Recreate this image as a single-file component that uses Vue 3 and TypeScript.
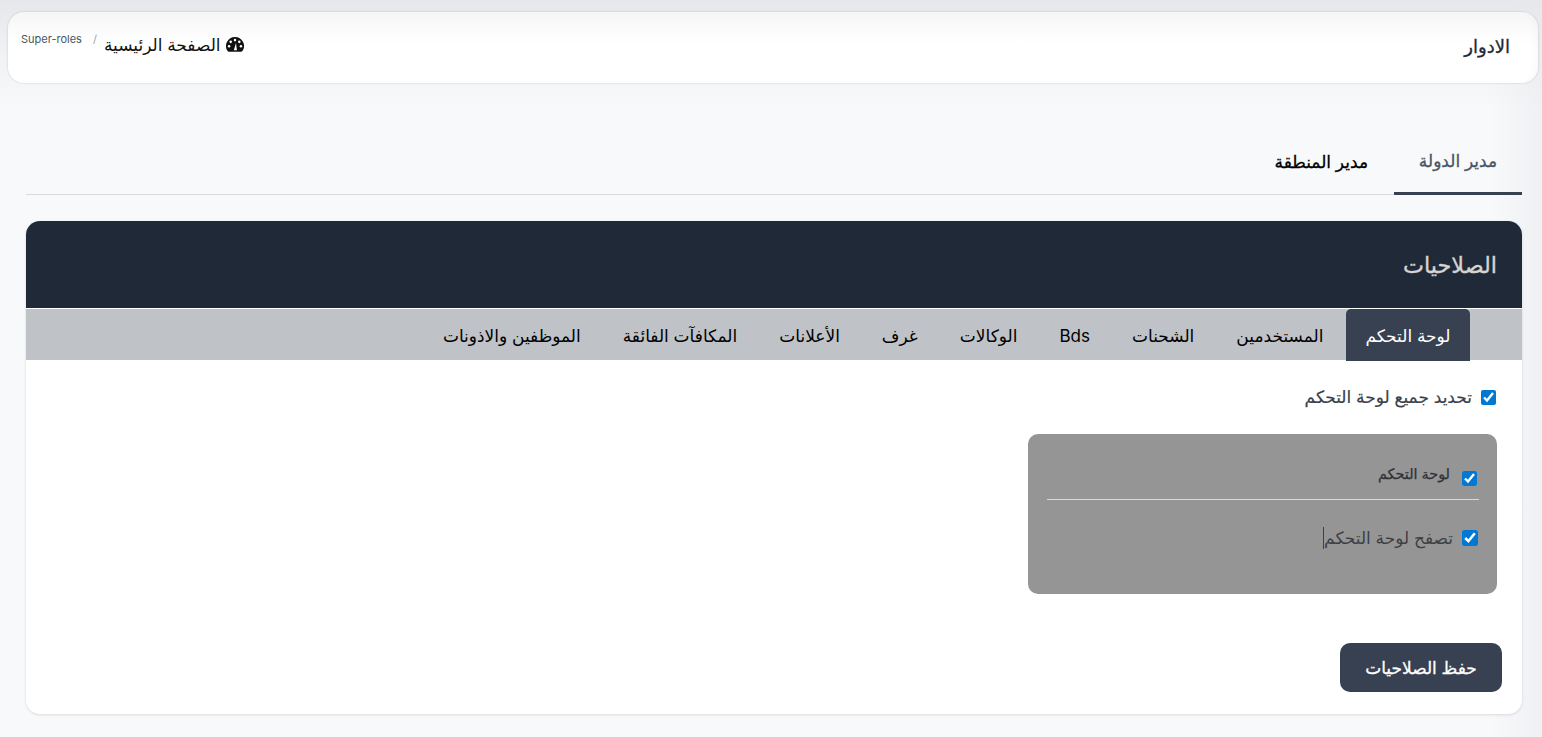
<script setup lang="ts">
const subTabs: string[] = ['لوحة التحكم', 'المستخدمين', 'الشحنات', 'Bds', 'الوكالات', 'غرف', 'الأعلانات', 'المكافآت الفائقة', 'الموظفين والاذونات']
</script>

<template>
  <div class="page" dir="rtl">
    <header class="topbar">
      <h1 class="page-title">الادوار</h1>
      <nav class="crumbs">
        <span class="crumb-home">
          <svg class="gauge" viewBox="0.8 1.8 18.4 15.4" aria-hidden="true">
            <path d="M10 1.8a9.2 9.2 0 0 0-7.6 14.4c.3.5.8.8 1.4.8h12.4c.6 0 1.1-.3 1.4-.8A9.2 9.2 0 0 0 10 1.8Z" />
            <circle cx="10" cy="5" r="1.3" fill="#fff" />
            <circle cx="5.6" cy="6.8" r="1.3" fill="#fff" />
            <circle cx="14.4" cy="6.8" r="1.3" fill="#fff" />
            <circle cx="3.9" cy="11.2" r="1.3" fill="#fff" />
            <circle cx="16.1" cy="11.2" r="1.3" fill="#fff" />
            <path d="M8.8 15.5 11 8l1 7.5Z" fill="#fff" />
          </svg>
          الصفحة الرئيسية
        </span>
        <span class="sep">/</span>
        <span class="crumb-sub" dir="ltr">Super-roles</span>
      </nav>
    </header>

    <div class="role-tabs">
      <button class="role-tab active">مدير الدولة</button>
      <button class="role-tab">مدير المنطقة</button>
    </div>

    <section class="card">
      <div class="card-head">
        <h2>الصلاحيات</h2>
      </div>
      <div class="sub-tabs">
        <button v-for="(t, i) in subTabs" :key="t" class="sub-tab" :class="{ on: i === 0 }">{{ t }}</button>
      </div>
      <div class="card-body">
        <label class="all-row">
          <input type="checkbox" checked />
          <span>تحديد جميع لوحة التحكم</span>
        </label>
        <div class="perm-box">
          <label class="perm-head">
            <input type="checkbox" checked />
            <span>لوحة التحكم</span>
          </label>
          <hr class="perm-line" />
          <label class="perm-item">
            <input type="checkbox" checked />
            <span>تصفح لوحة التحكم</span><i class="caret"></i>
          </label>
        </div>
        <div class="actions">
          <button class="save">حفظ الصلاحيات</button>
        </div>
      </div>
    </section>
  </div>
</template>

<style scoped>
.page {
  box-sizing: border-box;
  width: 1542px;
  height: 737px;
  overflow: hidden;
  padding: 12px 4px 0 8px;
  background:
    linear-gradient(to right, rgba(232, 233, 236, 0) 1490px, rgba(232, 233, 236, .55) 100%),
    linear-gradient(#e5e7eb 0, #f1f2f4 55px, #f8f9fb 110px, #f8f9fb 100%);
  font-family: Inter, "DejaVu Sans", sans-serif;
  color: #1f2937;
}
.topbar {
  box-sizing: border-box;
  height: 71px;
  display: flex;
  justify-content: space-between;
  padding: 0 28px 0 13px;
  background: linear-gradient(#f6f6f7, #fff 45%);
  border-radius: 16px;
  box-shadow: 0 0 2px rgba(0, 0, 0, .22), inset -8px 0 10px -6px rgba(0, 0, 0, .03);
}
.page-title {
  margin: 22px 0 0;
  font-size: 18px;
  line-height: 26px;
  font-weight: 400;
  -webkit-text-stroke: .3px currentColor;
  color: #1f2937;
}
.crumbs {
  display: flex;
  align-items: flex-start;
  color: #111;
}
.crumb-home {
  margin-top: 21px;
  font-size: 17px;
  line-height: 24px;
  display: flex;
  align-items: center;
  gap: 5px;
}
.gauge {
  width: 18px;
  height: 15px;
  margin-bottom: 1px;
  fill: #111;
}
.sep {
  margin: 20px 7px 0 11px;
  font-size: 11px;
  line-height: 14px;
  color: #9ca3af;
}
.crumb-sub {
  margin-top: 20px;
  font-size: 11px;
  line-height: 14px;
  color: #4b5563;
}
.role-tabs {
  margin: 48px 16px 0 18px;
  height: 64px;
  box-sizing: border-box;
  display: flex;
  border-bottom: 1px solid #d9dadd;
}
.role-tab {
  height: 64px;
  padding: 0 26px 2px 25px;
  background: none;
  border: 0;
  white-space: nowrap;
  font: 400 17px/24px Inter, "DejaVu Sans", sans-serif;
  -webkit-text-stroke: .3px currentColor;
  color: #000;
}
.role-tab.active {
  width: 128px;
  padding: 0 0 2px;
  color: #4b5563;
  border-bottom: 3px solid #374151;
}
.card {
  margin: 26px 16px 0 18px;
  height: 493px;
  background: #fff;
  border-radius: 14px;
  box-shadow: 0 1px 3px rgba(0, 0, 0, .12);
  overflow: hidden;
}
.card-head {
  box-sizing: border-box;
  height: 87px;
  padding: 0 25px;
  display: flex;
  align-items: center;
  background: #1f2937;
}
.card-head h2 {
  margin: 0;
  font-size: 22.3px;
  font-weight: 400;
  -webkit-text-stroke: .35px currentColor;
  color: #d6d3d1;
}
.sub-tabs {
  margin-top: 1px;
  height: 51px;
  padding-right: 52px;
  display: flex;
  background: #bfc2c6;
}
.sub-tab {
  height: 52px;
  padding: 2px 19.5px 0;
  margin-left: 3px;
  background: none;
  border: 0;
  border-radius: 5px 5px 0 0;
  white-space: nowrap;
  font: 400 17px/24px Inter, "DejaVu Sans", sans-serif;
  color: #000;
}
.sub-tab.on {
  background: #374151;
  color: #fff;
}
.card-body {
  padding: 0 25px 0 20px;
}
input[type="checkbox"] {
  width: 15px;
  height: 15px;
  margin: 0;
  accent-color: #0078d4;
}
.all-row {
  display: flex;
  align-items: center;
  gap: 9px;
  height: 24px;
  margin-top: 25px;
  padding-right: 1px;
  font-size: 17px;
  -webkit-text-stroke: .2px currentColor;
  color: #3a3f4a;
}
.perm-box {
  box-sizing: border-box;
  width: 469px;
  height: 160px;
  margin-top: 25px;
  padding: 29px 18px 0 19px;
  background: #959595;
  border-radius: 10px;
}
.perm-head {
  display: flex;
  align-items: center;
  gap: 12px;
  height: 24px;
  padding-right: 2px;
  font-size: 14.4px;
  -webkit-text-stroke: .25px currentColor;
  color: #2f3238;
}
.perm-head input {
  margin-top: 7px;
}
.perm-head span {
  margin-bottom: 3px;
}
.perm-line {
  margin: 12px 0 0;
  border: 0;
  border-top: 1px solid #d9d9d9;
}
.perm-item {
  display: flex;
  align-items: center;
  gap: 9px;
  height: 24px;
  margin-top: 26px;
  padding-right: 1px;
  font-size: 17px;
  color: #3d3f45;
}
.perm-item input {
  width: 16px;
  height: 16px;
}
.caret {
  width: 1px;
  height: 22px;
  margin-right: -9px;
  background: #374151;
}
.actions {
  margin: 49px -5px 0 0;
  display: flex;
}
.save {
  width: 162px;
  height: 49px;
  border: 0;
  border-radius: 10px;
  background: #374151;
  color: #fff;
  font: 400 17px/24px Inter, "DejaVu Sans", sans-serif;
  -webkit-text-stroke: .3px currentColor;
}
</style>
